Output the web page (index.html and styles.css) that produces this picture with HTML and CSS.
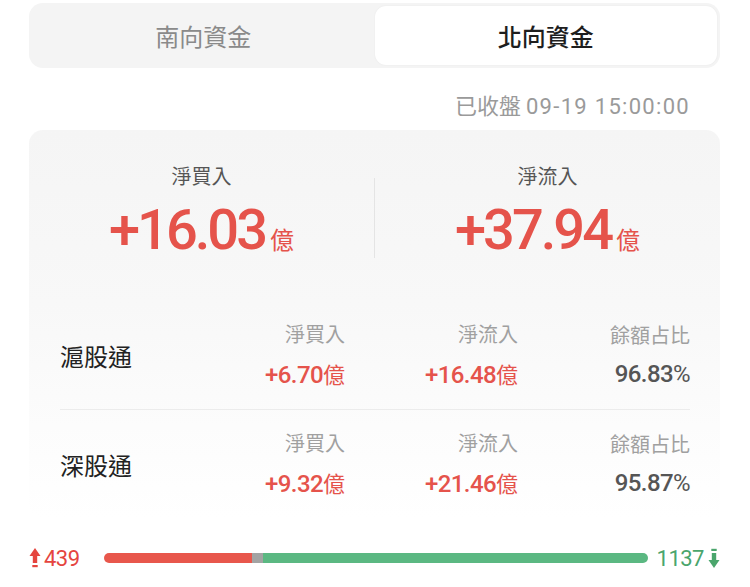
FILE: index.html
```html
<!DOCTYPE html>
<html lang="zh-Hant">
<head>
    <meta charset="UTF-8">
    <meta name="viewport" content="width=device-width, initial-scale=1.0">
    <title>北向資金</title>
    <link rel="stylesheet" href="styles.css">
</head>
<body>
    <div class="page">
        <div class="tabs">
            <div class="tab">南向資金</div>
            <div class="tab active">北向資金</div>
        </div>

        <div class="update-time">已收盤 <span class="time">09-19 15:00:00</span></div>

        <div class="card">
            <div class="summary">
                <div class="summary-item">
                    <div class="summary-label">淨買入</div>
                    <div class="summary-value">+16.03<span class="unit">億</span></div>
                </div>
                <div class="summary-divider"></div>
                <div class="summary-item">
                    <div class="summary-label">淨流入</div>
                    <div class="summary-value">+37.94<span class="unit">億</span></div>
                </div>
            </div>

            <div class="row">
                <div class="row-name">滬股通</div>
                <div class="cell">
                    <div class="cell-label">淨買入</div>
                    <div class="cell-value up">+6.70<span class="unit-sm">億</span></div>
                </div>
                <div class="cell">
                    <div class="cell-label">淨流入</div>
                    <div class="cell-value up">+16.48<span class="unit-sm">億</span></div>
                </div>
                <div class="cell">
                    <div class="cell-label">餘額占比</div>
                    <div class="cell-value">96.83<span class="pct">%</span></div>
                </div>
            </div>

            <div class="row">
                <div class="row-name">深股通</div>
                <div class="cell">
                    <div class="cell-label">淨買入</div>
                    <div class="cell-value up">+9.32<span class="unit-sm">億</span></div>
                </div>
                <div class="cell">
                    <div class="cell-label">淨流入</div>
                    <div class="cell-value up">+21.46<span class="unit-sm">億</span></div>
                </div>
                <div class="cell">
                    <div class="cell-label">餘額占比</div>
                    <div class="cell-value">95.87<span class="pct">%</span></div>
                </div>
            </div>
        </div>

        <div class="breadth">
            <div class="count count-up">
                <svg class="arrow" width="12" height="22" viewBox="0 0 12 22">
                    <path d="M6 1 L11.5 9 L8.2 9 L8.2 16 L3.8 16 L3.8 9 L0.5 9 Z" fill="#e5453f"/>
                    <rect x="3.3" y="18" width="5.4" height="2.2" fill="#e5453f"/>
                </svg>
                <span>439</span>
            </div>
            <div class="bar">
                <div class="bar-up" style="width: 27.3%"></div>
                <div class="bar-flat" style="width: 2%"></div>
                <div class="bar-down"></div>
            </div>
            <div class="count count-down">
                <span>1137</span>
                <svg class="arrow" width="12" height="22" viewBox="0 0 12 22">
                    <rect x="3.3" y="1.8" width="5.4" height="2.2" fill="#4aa56c"/>
                    <path d="M6 21 L11.5 13 L8.2 13 L8.2 6 L3.8 6 L3.8 13 L0.5 13 Z" fill="#4aa56c"/>
                </svg>
            </div>
        </div>
    </div>
</body>
</html>
```

FILE: styles.css
```css
html, body {
    margin: 0;
    padding: 0;
    background-color: #ffffff;
}

body {
    font-family: "Noto Sans CJK TC", "Noto Sans", sans-serif;
    color: #333;
}

.page {
    width: 750px;
    padding-top: 3px;
}

/* tabs */
.tabs {
    display: flex;
    margin: 0 30px 0 29px;
    height: 65px;
    padding: 3px;
    box-sizing: border-box;
    background-color: #f4f4f4;
    border-radius: 14px;
}

.tab {
    flex: 1;
    display: flex;
    align-items: center;
    justify-content: center;
    font-size: 24px;
    color: #8a8a8a;
    border-radius: 11px;
}

.tab.active {
    background-color: #ffffff;
    color: #1e1e1e;
    font-weight: 500;
    box-shadow: 0 0 2px rgba(0, 0, 0, 0.06);
}

.update-time {
    text-align: right;
    margin: 0 60px 0 0;
    height: 62px;
    line-height: 72px;
    font-size: 22px;
    color: #9a9a9a;
}

.time {
    font-family: "Roboto", sans-serif;
    letter-spacing: 1.3px;
}

/* card */
.card {
    margin: 0 30px 0 29px;
    border-radius: 14px;
    background: linear-gradient(to bottom, #f5f5f5 0%, #f8f8f8 45%, #ffffff 100%);
    padding: 0 30px 0 31px;
}

.summary {
    display: flex;
    align-items: center;
    height: 171px;
    margin: 0 -30px 0 -31px;
}

.summary-item {
    flex: 1;
    text-align: center;
    padding-bottom: 2px;
}

.summary-label {
    font-size: 20px;
    line-height: 28px;
    color: #555;
}

.summary-value {
    margin-top: 12px;
    font-family: "Roboto", sans-serif;
    font-weight: 500;
    font-size: 56px;
    line-height: 56px;
    letter-spacing: -3px;
    color: #e5534b;
}

.unit {
    font-family: "Noto Sans CJK TC", sans-serif;
    font-size: 24px;
    font-weight: 400;
    letter-spacing: 0;
    margin-left: 5px;
}

.summary-divider {
    width: 1px;
    height: 80px;
    background-color: #e4e4e4;
    margin-top: 4px;
}

.row {
    display: grid;
    grid-template-columns: 112px 173px 173px 172px;
    align-items: center;
    height: 108px;
    border-bottom: 1px solid #ececec;
}

.row:last-child {
    border-bottom: none;
}

.row-name {
    font-size: 24px;
    color: #222;
}

.cell {
    text-align: right;
}

.cell-label {
    font-size: 20px;
    line-height: 28px;
    color: #a0a0a0;
}

.cell-value {
    margin-top: 10px;
    font-family: "Roboto", sans-serif;
    font-weight: 500;
    font-size: 24px;
    line-height: 30px;
    letter-spacing: -0.6px;
    color: #555;
}

.cell-value.up {
    color: #e5534b;
}

.unit-sm {
    font-family: "Noto Sans CJK TC", sans-serif;
    font-weight: 400;
    font-size: 22px;
    letter-spacing: 0;
}

.pct {
    font-weight: 400;
}

/* rise/fall bar */
.breadth {
    display: flex;
    align-items: center;
    margin: 22px 30px 0 29px;
    height: 36px;
}

.count {
    display: flex;
    align-items: center;
    font-family: "Roboto", sans-serif;
    font-size: 22px;
    letter-spacing: -0.5px;
}

.count-up {
    color: #e5453f;
    width: 75px;
}

.count-up .arrow {
    margin-right: 3px;
}

.count-down {
    color: #4aa56c;
    margin-left: 9px;
}

.count-down .arrow {
    margin-left: 4px;
}

.bar {
    flex: 1;
    display: flex;
    height: 10px;
    border-radius: 5px;
    overflow: hidden;
}

.bar-up {
    background-color: #e8574c;
}

.bar-flat {
    background-color: #a3a3a3;
}

.bar-down {
    flex: 1;
    background-color: #5bb882;
}
```
